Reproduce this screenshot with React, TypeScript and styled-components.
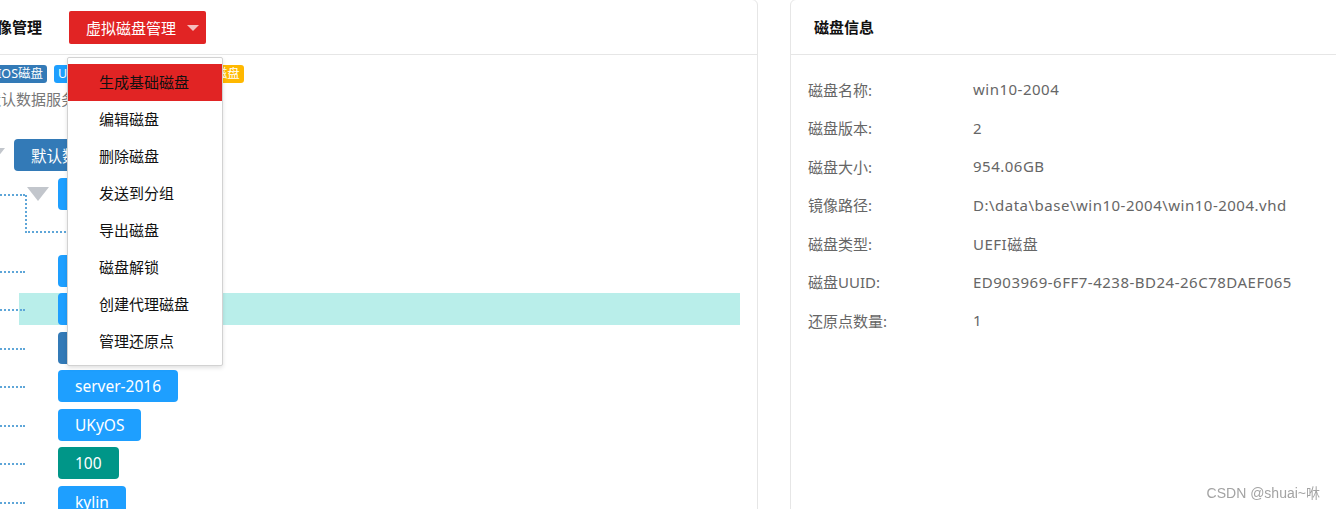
import styled, { createGlobalStyle } from "styled-components";

const GlobalStyle = createGlobalStyle`
  html, body {
    margin: 0;
    padding: 0;
    height: 509px;
    overflow: hidden;
    background: #fff;
  }
  body {
    font-family: "Noto Sans", "Noto Sans CJK SC", sans-serif;
    color: #333;
  }
`;

const Page = styled.div`
  display: flex;
  gap: 32px;
  margin-left: -36px;
  height: 540px;
`;

const Panel = styled.div<{ width: number }>`
  width: ${({ width }) => width}px;
  flex-shrink: 0;
  border: 1px solid #e6e6e6;
  border-radius: 6px;
  background: #fff;
  margin-top: -1px;
`;

const PanelHeader = styled.div<{ pad: number }>`
  height: 55px;
  display: flex;
  align-items: center;
  padding-left: ${({ pad }) => pad}px;
  border-bottom: 1px solid #e6e6e6;
  box-sizing: border-box;
`;

const HeaderTitle = styled.h2`
  margin: 0;
  font-size: 15px;
  font-weight: 700;
  color: #111;
  line-height: 20px;
  font-family: "Noto Sans CJK SC", sans-serif;
`;

const DropdownWrap = styled.div`
  position: relative;
  margin-left: 27px;
`;

const DropdownButton = styled.button`
  height: 33px;
  padding: 0 7px 0 17px;
  display: flex;
  align-items: center;
  gap: 11px;
  background: #e12424;
  border: none;
  border-radius: 2px;
  color: #fff;
  font-family: "Noto Sans CJK SC", sans-serif;
  font-size: 15px;
`;

const Caret = styled.span`
  width: 0;
  height: 0;
  border-left: 6px solid transparent;
  border-right: 6px solid transparent;
  border-top: 6px solid rgba(255, 255, 255, 0.7);
  margin-top: 2px;
`;

const Menu = styled.ul`
  position: absolute;
  top: 46px;
  left: -2px;
  z-index: 10;
  width: 154px;
  margin: 0;
  padding: 6px 0 5px;
  list-style: none;
  background: #fff;
  border: 1px solid #d2d2d2;
  border-radius: 2px;
  box-shadow: 0 2px 4px rgba(0, 0, 0, 0.12);
`;

const MenuItem = styled.li<{ active?: boolean }>`
  height: 37px;
  line-height: 36px;
  padding-left: 31px;
  font-size: 15px;
  font-family: "Noto Sans CJK SC", sans-serif;
  color: #111;
  background: ${({ active }) => (active ? "#e12424" : "transparent")};
`;

const LeftBody = styled.div`
  padding: 10px 17px 0 18px;
`;

const TagRow = styled.div`
  display: flex;
  gap: 7px;
  margin-left: 2px;
`;

const Tag = styled.span<{ color: string }>`
  height: 18px;
  line-height: 18px;
  padding: 0 4px;
  border-radius: 3px;
  background: ${({ color }) => color};
  color: #fff;
  font-size: 12.5px;
  font-family: "Noto Sans", "Noto Sans CJK SC", sans-serif;
`;

const ServerLine = styled.div`
  margin: 5px 0 0 3px;
  line-height: 22px;
  font-size: 15px;
  color: #777;
  font-family: "Noto Sans CJK SC", sans-serif;
`;

const Tree = styled.div`
  margin-top: 29px;
  display: flex;
  flex-direction: column;
  gap: 6.5px;
`;

const TreeRow = styled.div<{ selected?: boolean }>`
  height: 32px;
  display: flex;
  align-items: center;
  background: ${({ selected }) =>
    selected
      ? "linear-gradient(to right, transparent 36px, #b9eeea 36px)"
      : "transparent"};
`;

const Toggle = styled.span`
  width: 0;
  height: 0;
  flex-shrink: 0;
  border-left: 11px solid transparent;
  border-right: 11px solid transparent;
  border-top: 14px solid #c2c6cc;
`;

const Dots = styled.span<{ from: number; width: number }>`
  flex-shrink: 0;
  margin-left: ${({ from }) => from}px;
  width: ${({ width }) => width}px;
  border-bottom: 2px dotted #5ea6d8;
  margin-top: 2px;
`;

const Elbow = styled.span`
  flex-shrink: 0;
  align-self: flex-start;
  margin: -21.5px 0 0 42px;
  width: 50px;
  height: 36.5px;
  border-left: 2px dotted #5ea6d8;
  border-bottom: 2px dotted #5ea6d8;
`;

const Spacer = styled.span<{ width: number }>`
  flex-shrink: 0;
  width: ${({ width }) => width}px;
`;

const nodeColors = {
  blue: "#1e9fff",
  navy: "#337ab7",
  teal: "#009688",
};

const Node = styled.button<{ tone: keyof typeof nodeColors }>`
  height: 32px;
  padding: 0 17px;
  border: none;
  border-radius: 4px;
  background: ${({ tone }) => nodeColors[tone]};
  color: #fff;
  font-size: 15.5px;
  font-family: "Noto Sans", "Noto Sans CJK SC", sans-serif;
  white-space: nowrap;
`;

const InfoBody = styled.div`
  padding: 15px 0 0 17px;
  display: flex;
  flex-direction: column;
`;

const InfoRow = styled.div`
  display: grid;
  grid-template-columns: 165px 1fr;
  height: 38.5px;
  align-items: center;
  font-size: 15px;
  color: #666;
`;

const InfoValue = styled.span`
  letter-spacing: 0.5px;
`;

const Watermark = styled.div`
  position: fixed;
  right: 16px;
  bottom: 7px;
  font-family: "Liberation Sans", "Noto Sans CJK SC", sans-serif;
  font-size: 14px;
  color: #a3a3a3;
`;

const menuItems = [
  "生成基础磁盘",
  "编辑磁盘",
  "删除磁盘",
  "发送到分组",
  "导出磁盘",
  "磁盘解锁",
  "创建代理磁盘",
  "管理还原点",
];

const info: [string, string][] = [
  ["磁盘名称:", "win10-2004"],
  ["磁盘版本:", "2"],
  ["磁盘大小:", "954.06GB"],
  ["镜像路径:", "D:\\data\\base\\win10-2004\\win10-2004.vhd"],
  ["磁盘类型:", "UEFI磁盘"],
  ["磁盘UUID:", "ED903969-6FF7-4238-BD24-26C78DAEF065"],
  ["还原点数量:", "1"],
];

const children: { name: string; tone: keyof typeof nodeColors; selected?: boolean }[] = [
  { name: "win7", tone: "blue" },
  { name: "win10", tone: "blue", selected: true },
  { name: "server", tone: "navy" },
  { name: "server-2016", tone: "blue" },
  { name: "UKyOS", tone: "blue" },
  { name: "100", tone: "teal" },
  { name: "kylin", tone: "blue" },
];

function App() {
  return (
    <>
      <GlobalStyle />
      <Page>
        <Panel width={792}>
          <PanelHeader pad={17}>
            <HeaderTitle>镜像管理</HeaderTitle>
            <DropdownWrap>
              <DropdownButton>
                虚拟磁盘管理
                <Caret />
              </DropdownButton>
              <Menu>
                {menuItems.map((m, i) => (
                  <MenuItem key={m} active={i === 0}>
                    {m}
                  </MenuItem>
                ))}
              </Menu>
            </DropdownWrap>
          </PanelHeader>

          <LeftBody>
            <TagRow>
              <Tag color="#337ab7">BIOS磁盘</Tag>
              <Tag color="#1e9fff">UEFI磁盘</Tag>
              <Tag color="#009688">代理磁盘</Tag>
              <Tag color="#ffb800">锁定磁盘</Tag>
            </TagRow>
            <ServerLine>默认数据服务器</ServerLine>

            <Tree>
              <TreeRow>
                <Toggle />
                <Spacer width={9} />
                <Node tone="navy">默认数据服务器</Node>
              </TreeRow>
              <TreeRow>
                <Dots from={10} width={32} />
                <Spacer width={2} />
                <Toggle />
                <Spacer width={9} />
                <Node tone="blue">windows</Node>
              </TreeRow>
              <TreeRow>
                <Elbow />
                <Node tone="blue">1909</Node>
              </TreeRow>
              {children.map((c) => (
                <TreeRow key={c.name} selected={c.selected}>
                  <Dots from={10} width={32} />
                  <Spacer width={33} />
                  <Node tone={c.tone}>{c.name}</Node>
                </TreeRow>
              ))}
            </Tree>
          </LeftBody>
        </Panel>

        <Panel width={600}>
          <PanelHeader pad={23}>
            <HeaderTitle>磁盘信息</HeaderTitle>
          </PanelHeader>
          <InfoBody>
            {info.map(([k, v]) => (
              <InfoRow key={k}>
                <span>{k}</span>
                <InfoValue>{v}</InfoValue>
              </InfoRow>
            ))}
          </InfoBody>
        </Panel>
      </Page>
      <Watermark>CSDN @shuai~咻</Watermark>
    </>
  );
}

export default App;
